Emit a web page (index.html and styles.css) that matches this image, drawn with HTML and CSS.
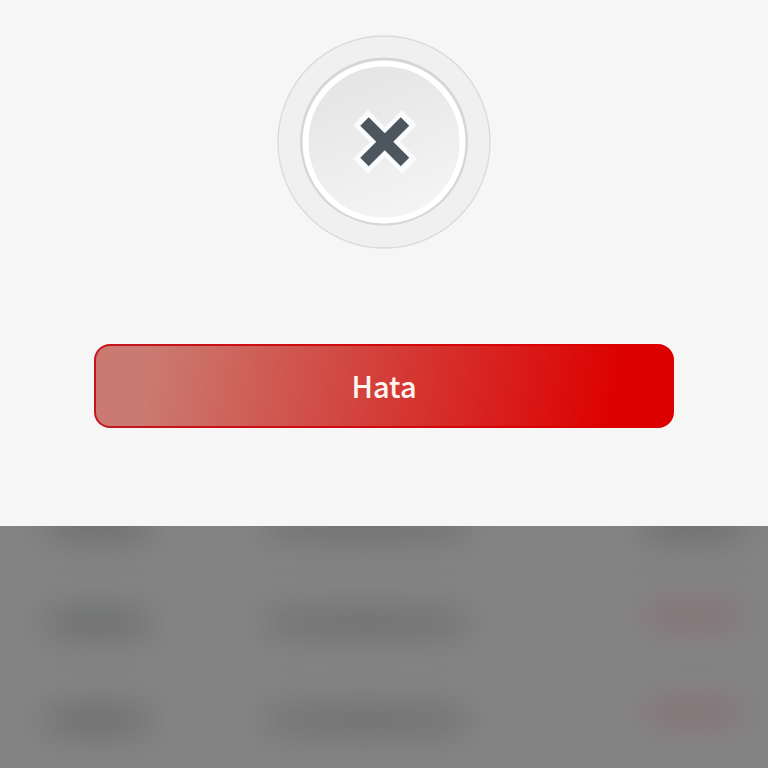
FILE: index.html
```html
<!DOCTYPE html>
<html lang="tr">
<head>
<meta charset="utf-8">
<meta name="viewport" content="width=device-width, initial-scale=1">
<title>Hata</title>
<link rel="stylesheet" href="styles.css">
</head>
<body>
<main class="sheet">
  <svg class="emblem" viewBox="0 0 214 214" aria-hidden="true">
    <defs>
      <linearGradient id="face" x1="0.3" y1="0" x2="0.7" y2="1">
        <stop offset="0" stop-color="#e4e4e4"/>
        <stop offset="1" stop-color="#f5f5f5"/>
      </linearGradient>
    </defs>
    <circle cx="107" cy="107" r="106" fill="#f0f0f0" stroke="#dadada" stroke-width="1.3"/>
    <circle cx="107" cy="106.500" r="84" fill="#d6d6d6"/>
    <circle cx="107" cy="107" r="78.500" fill="url(#face)" stroke="#fff" stroke-width="6"/>
    <g fill="none" stroke-width="12">
      <path d="M83.500 82.500L132.500 131.500M132.500 82.500L83.500 131.500" stroke="#f9fbfd" stroke-width="21"/>
      <path d="M87.500 86.500L128 127M128 86.500L87.500 127" stroke="#4d565f"/>
    </g>
  </svg>
  <button class="action" type="button">Hata</button>
</main>
<div class="backdrop" aria-hidden="true">
  <div class="row row-first"><i class="smudge"></i><i class="smudge smudge-wide"></i><i class="smudge"></i></div>
  <div class="row"><i class="smudge"></i><i class="smudge smudge-wide"></i><i class="smudge smudge-red"></i></div>
  <div class="row"><i class="smudge"></i><i class="smudge smudge-wide"></i><i class="smudge smudge-red"></i></div>
</div>
</body>
</html>
```
FILE: styles.css
```css
* {
  box-sizing: border-box;
}

body {
  margin: 0;
  min-height: 100vh;
  display: flex;
  flex-direction: column;
  background: #848484;
  font-family: "Noto Sans CJK SC", "Open Sans", sans-serif;
}

.sheet {
  display: flex;
  flex-direction: column;
  align-items: center;
  gap: 95px;
  padding: 35px 94px 98px;
  background: #f6f6f6;
}

.emblem {
  display: block;
  width: 214px;
}

.action {
  width: 100%;
  height: 84px;
  padding: 0 0 2px;
  border: 2px solid transparent;
  border-radius: 16px;
  background:
    linear-gradient(100deg, #ca7a70 10%, #dd0000 90%) padding-box,
    linear-gradient(90deg, #c4161e, #dd0000 90%) border-box;
  color: #fff5f0;
  font: inherit;
  font-size: 29px;
  font-weight: 500;
  line-height: 40px;
}

.backdrop {
  flex: 1;
  overflow: hidden;
  padding-top: 48px;
}

.row {
  display: grid;
  grid-template-columns: 31% 53% 16%;
  align-items: center;
  height: 97px;
  padding: 0 16px 0 42px;
}

.row-first {
  margin-top: -97px;
}

.smudge {
  width: 112px;
  height: 32px;
  border-radius: 16px;
  background: radial-gradient(#666868, #7a7a7a);
  filter: blur(16px);
}

.smudge-wide {
  width: 208px;
  background: radial-gradient(#6c6c6c, #797979);
}

.smudge-red {
  margin-bottom: 16px;
  background: radial-gradient(#876c72, #837e7f);
}
```
